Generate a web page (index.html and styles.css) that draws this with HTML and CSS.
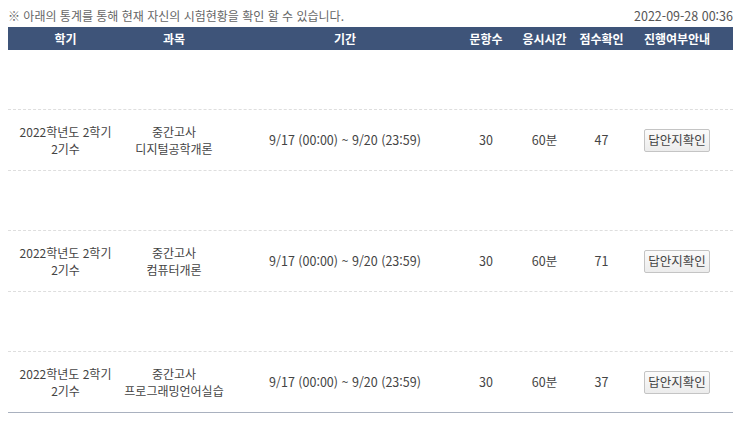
FILE: index.html
```html
<!DOCTYPE html>
<html lang="ko">
<head>
<meta charset="utf-8">
<link rel="stylesheet" href="styles.css">
</head>
<body>
<div class="page">
  <div class="topbar">
    <span class="notice">※ 아래의 통계를 통해 현재 자신의 시험현황을 확인 할 수 있습니다.</span>
    <span class="stamp">2022-09-28 00:36</span>
  </div>
  <div class="grid">
    <div class="row head">
      <div class="cell">학기</div>
      <div class="cell">과목</div>
      <div class="cell">기간</div>
      <div class="cell">문항수</div>
      <div class="cell">응시시간</div>
      <div class="cell">점수확인</div>
      <div class="cell">진행여부안내</div>
    </div>

    <div class="row empty"></div>
    <div class="row data">
      <div class="cell two">2022학년도 2학기<br>2기수</div>
      <div class="cell two">중간고사<br>디지털공학개론</div>
      <div class="cell">9/17 (00:00) ~ 9/20 (23:59)</div>
      <div class="cell">30</div>
      <div class="cell">60분</div>
      <div class="cell">47</div>
      <div class="cell"><button class="btn">답안지확인</button></div>
    </div>

    <div class="row empty"></div>
    <div class="row data">
      <div class="cell two">2022학년도 2학기<br>2기수</div>
      <div class="cell two">중간고사<br>컴퓨터개론</div>
      <div class="cell">9/17 (00:00) ~ 9/20 (23:59)</div>
      <div class="cell">30</div>
      <div class="cell">60분</div>
      <div class="cell">71</div>
      <div class="cell"><button class="btn">답안지확인</button></div>
    </div>

    <div class="row empty"></div>
    <div class="row data last">
      <div class="cell two">2022학년도 2학기<br>2기수</div>
      <div class="cell two">중간고사<br>프로그래밍언어실습</div>
      <div class="cell">9/17 (00:00) ~ 9/20 (23:59)</div>
      <div class="cell">30</div>
      <div class="cell">60분</div>
      <div class="cell">37</div>
      <div class="cell"><button class="btn">답안지확인</button></div>
    </div>
  </div>
</div>
</body>
</html>
```

FILE: styles.css
```css
html, body {
  margin: 0;
  padding: 0;
  background: #ffffff;
}
body {
  font-family: "Noto Sans CJK KR", "Noto Sans", sans-serif;
  font-size: 12.5px;
  color: #444;
}
.page {
  width: 725px;
  padding: 0 8px;
}
.topbar {
  height: 27px;
  display: flex;
  justify-content: space-between;
  align-items: center;
  padding-top: 3px;
  box-sizing: border-box;
}
.notice {
  color: #666;
  font-size: 12px;
}
.stamp {
  color: #555;
  font-size: 12.5px;
}
.row {
  display: grid;
  grid-template-columns: 115px 102px 240px 42px 75px 39px 112px;
  box-sizing: border-box;
}
.row.head {
  height: 23px;
  background: #3e5479;
  color: #ffffff;
  font-weight: 600;
  font-size: 12px;
}
.cell {
  display: flex;
  align-items: center;
  justify-content: center;
  text-align: center;
  white-space: nowrap;
  line-height: 16px;
}
.cell.two {
  font-size: 12px;
  line-height: 17.5px;
}
.row.empty {
  height: 60px;
  border-bottom: 1px dashed #dedede;
}
.row.data {
  height: 61px;
  border-bottom: 1px dashed #dedede;
}
.row.data.last {
  border-bottom: 1px solid #a9b1bf;
}
.btn {
  font-family: "Noto Sans CJK KR", "Noto Sans", sans-serif;
  font-size: 12.5px;
  color: #444;
  height: 23px;
  padding: 0 3px;
  background: linear-gradient(#fbfbfb, #ececec);
  border: 1px solid #c4c4c4;
  border-radius: 2px;
  line-height: 20px;
}
```
